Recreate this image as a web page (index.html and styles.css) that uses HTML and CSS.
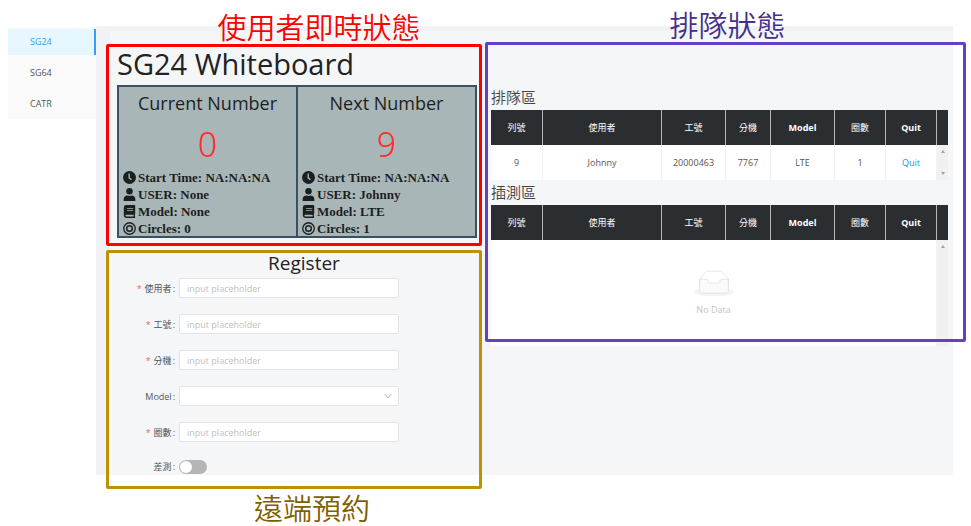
FILE: index.html
```html
<!DOCTYPE html>
<html lang="zh-Hant">
<head>
<meta charset="utf-8">
<title>SG24 Whiteboard</title>
<link rel="stylesheet" href="styles.css">
</head>
<body>
<svg class="sprite" aria-hidden="true">
  <symbol id="clock" viewBox="0 0 16 16"><circle cx="8" cy="8" r="8"/><path d="M7.600 3v5.500l2.800 2.200" fill="none" stroke="#a9b6b8" stroke-width="1.700"/></symbol>
  <symbol id="user" viewBox="0 0 16 16"><circle cx="8" cy="4" r="4"/><path d="M.8 16v-2.200c0-2.800 2-4.600 4.600-4.600 1.600.8 3.600.8 5.200 0 2.600 0 4.600 1.800 4.600 4.600V16z"/></symbol>
  <symbol id="book" viewBox="0 0 16 16"><path fill-rule="evenodd" d="M4 0h10.200c.5 0 .8.300.8.800v10.400c0 .3-.1.500-.3.600-.2.700-.2 1.500 0 2.200.2.100.3.300.3.600v.600c0 .5-.3.800-.8.800H4a3 3 0 0 1-3-3V3a3 3 0 0 1 3-3zm1 4v1h7.500V4zm0 2.200v1h7.500v-1zM4 12a1 1 0 0 0 0 2h9v-2z"/></symbol>
  <symbol id="rings" viewBox="0 0 16 16"><g fill="none" stroke="currentColor"><circle cx="8" cy="8" r="7.100" stroke-width="1.600"/><circle cx="8" cy="8" r="3.500" stroke-width="1.800"/></g></symbol>
</svg>
<div class="app">
  <nav class="sidebar">
    <a class="nav-item active" href="#sg24">SG24</a>
    <a class="nav-item" href="#sg64">SG64</a>
    <a class="nav-item" href="#catr">CATR</a>
  </nav>
  <main class="main">
    <div class="content">
      <div class="column">
        <section class="status">
          <div class="frame frame-red"><span class="caption">使用者即時狀態</span></div>
          <h1>SG24 Whiteboard</h1>
          <div class="cards">
            <article class="card">
              <h2>Current Number</h2>
              <p class="number">0</p>
              <ul>
                <li><svg><use href="#clock"/></svg>Start Time: NA:NA:NA</li>
                <li><svg><use href="#user"/></svg>USER: None</li>
                <li><svg><use href="#book"/></svg>Model: None</li>
                <li><svg><use href="#rings"/></svg>Circles: 0</li>
              </ul>
            </article>
            <article class="card">
              <h2>Next Number</h2>
              <p class="number">9</p>
              <ul>
                <li><svg><use href="#clock"/></svg>Start Time: NA:NA:NA</li>
                <li><svg><use href="#user"/></svg>USER: Johnny</li>
                <li><svg><use href="#book"/></svg>Model: LTE</li>
                <li><svg><use href="#rings"/></svg>Circles: 1</li>
              </ul>
            </article>
          </div>
        </section>
        <section class="register">
          <div class="frame frame-gold"><span class="caption">遠端預約</span></div>
          <h2>Register</h2>
          <form>
            <div class="field"><label for="name"><i>*</i>使用者<b>:</b></label><input class="control" id="name" type="text" placeholder="input placeholder" required></div>
            <div class="field"><label for="staff"><i>*</i>工號<b>:</b></label><input class="control" id="staff" type="text" placeholder="input placeholder" required></div>
            <div class="field"><label for="ext"><i>*</i>分機<b>:</b></label><input class="control" id="ext" type="text" placeholder="input placeholder" required></div>
            <div class="field"><label for="model">Model<b>:</b></label>
              <span class="control-wrap"><select class="control" id="model"><option></option><option>LTE</option></select><svg class="chevron" viewBox="0 0 8 6"><path d="M.5.8 4 5 7.500.8" fill="none" stroke="#bfbfbf"/></svg></span></div>
            <div class="field"><label for="circles"><i>*</i>圈數<b>:</b></label><input class="control" id="circles" type="text" placeholder="input placeholder" required></div>
            <div class="field"><label for="insert">差測<b>:</b></label><input class="switch" id="insert" type="checkbox" role="switch"></div>
          </form>
        </section>
      </div>
      <section class="queues">
        <div class="frame frame-purple"><span class="caption">排隊狀態</span></div>
        <h2>排隊區</h2>
        <table>
          <colgroup><col class="c-first"><col><col class="c-wide"><col class="c-small"><col class="c-wide"><col class="c-mid"><col class="c-mid"><col class="c-bar"></colgroup>
          <thead><tr><th>列號</th><th>使用者</th><th>工號</th><th>分機</th><th class="latin">Model</th><th>圈數</th><th class="latin">Quit</th><th></th></tr></thead>
          <tbody><tr><td>9</td><td>Johnny</td><td>20000463</td><td>7767</td><td>LTE</td><td>1</td><td><a href="#quit">Quit</a></td>
            <td class="bar"><div class="arrows"><span class="up"></span><span class="down"></span></div></td></tr></tbody>
        </table>
        <h2>插測區</h2>
        <table>
          <colgroup><col class="c-first"><col><col class="c-wide"><col class="c-small"><col class="c-wide"><col class="c-mid"><col class="c-mid"><col class="c-bar"></colgroup>
          <thead><tr><th>列號</th><th>使用者</th><th>工號</th><th>分機</th><th class="latin">Model</th><th>圈數</th><th class="latin">Quit</th><th></th></tr></thead>
          <tbody><tr class="tall"><td class="empty" colspan="7">
            <svg viewBox="0 0 64 41"><ellipse cx="32" cy="33" rx="32" ry="7" fill="#f3f3f3"/><g stroke="#d9d9d9"><path fill="#fff" d="M55 12.800 44.900 1.300C44.400.6 43.600 0 42.800 0H21.200c-.8 0-1.600.5-2.100 1.300L9 12.800V22h46z"/><path fill="#fafafa" d="M41.600 15.900c0-1.600 1-2.900 2.200-2.900H55v18.100c0 2.100-1.300 3.900-3 3.900H12c-1.600 0-3-1.800-3-3.900V13h11.200c1.200 0 2.200 1.300 2.200 2.900 0 1.700 1 3 2.200 3h14.800c1.200 0 2.200-1.400 2.200-3z"/></g></svg>
            <p>No Data</p></td>
            <td class="bar"><div class="arrows"><span class="up"></span><span class="down"></span></div></td></tr></tbody>
        </table>
      </section>
    </div>
  </main>
</div>
</body>
</html>
```
FILE: styles.css
```css
* { box-sizing: border-box; }

body {
  margin: 0;
  background: #fff;
  color: #555;
  font: 9px/17px "Open Sans", "Noto Sans CJK TC", sans-serif;
}

h1, h2, p, ul { margin: 0; padding: 0; font-weight: 400; }
a { color: #1890ff; text-decoration: none; }
.sprite { position: absolute; width: 0; height: 0; }

.app { display: flex; align-items: flex-start; min-height: 100vh; padding: 26px 18px 0 8px; }

/* Sidebar */
.sidebar {
  display: flex;
  flex-direction: column;
  gap: 5px;
  width: 88px;
  margin-top: 1px;
  padding: 2px 0;
  background: #fafafa;
}
.nav-item { padding-left: 22px; line-height: 26px; color: #555; }
.nav-item.active { background: #e6f7ff; color: #3a9cf5; border-right: 2px solid #3a9cf5; }

/* Page body */
.main { flex: 1; padding: 5px 0 0 14px; background: #f0f2f5; }
.content {
  display: grid;
  grid-template-columns: 360fr 457fr;
  gap: 14px;
  padding: 13px 5px 0 7px;
  background: #f4f6f8;
}
.column { display: grid; gap: 12px; min-width: 0; }
.status, .register, .queues { position: relative; min-width: 0; }

/* Annotation frames drawn over the sections */
.frame { position: absolute; border: 3px solid; border-radius: 2px; pointer-events: none; z-index: 1; }
.caption {
  position: absolute;
  left: 0;
  right: 0;
  text-align: center;
  font: 350 29px/42px "Noto Sans CJK TC", sans-serif;
}
.frame-red { inset: 0 -5px -8px -11px; border-color: #f00; color: #f00; }
.frame-gold { inset: 0 -5px -14px -11px; border-color: #bf9000; color: #7f6000; }
.frame-purple { inset: -2px -18px 4px -6px; border-color: #6640c4; color: #44308c; }
.frame-red .caption { bottom: 100%; padding-left: 50px; }
.frame-gold .caption { top: 100%; padding-left: 36px; }
.frame-purple .caption { bottom: 100%; padding-left: 4px; }

/* Live status */
h1 { color: #222; font-size: 29px; line-height: 40px; padding-bottom: 1px; }
.cards { display: grid; grid-template-columns: 1fr 1fr; background: #a9b6b8; border: 1px solid #3c5064; }
.card { padding: 3px 4px 0; border: 1px solid #3c5064; color: #1c1f20; height: 151px; }
.card h2 { text-align: center; font-size: 18px; line-height: 26px; }
.number {
  padding: 7px 0 4px;
  color: #ff2d2d;
  text-align: center;
  font: 300 34px/42px "Noto Sans", sans-serif;
}
.card ul { list-style: none; font: 700 13px/17px "Liberation Serif", serif; }
.card li { display: flex; align-items: center; gap: 2px; }
.card li svg { width: 13px; height: 13px; fill: currentColor; }

/* Register form */
.register h2 { padding-left: 14px; color: #222; text-align: center; font-size: 19px; line-height: 26px; }
form { display: grid; gap: 16px; padding-top: 2px; }
.field { display: grid; grid-template-columns: 58px 61%; gap: 4px; align-items: center; }
.field label { text-align: right; }
.field i { margin-right: 3px; color: #ff5c5c; font-style: normal; }
.field b { margin-left: 1px; font-weight: 400; }
.control {
  display: block;
  width: 100%;
  height: 20px;
  padding: 0 7px;
  border: 1px solid #e3e4e6;
  border-radius: 2px;
  background: #fff;
  color: #555;
  font: inherit;
  appearance: none;
}
.control::placeholder { color: #bfbfbf; }
.control-wrap { position: relative; }
.chevron { position: absolute; right: 7px; top: 7px; width: 8px; height: 6px; }
.switch {
  display: flex;
  width: 28px;
  height: 14px;
  margin: 0;
  padding: 1px;
  border-radius: 7px;
  background: #b5b5b5;
  appearance: none;
}
.switch::before { content: ""; width: 12px; height: 12px; border-radius: 50%; background: #fff; }
.switch:checked { background: #1890ff; justify-content: flex-end; }

/* Queue tables */
.queues { align-self: start; padding-top: 41px; }
.queues h2 { padding-bottom: 2px; font: 350 15px/23px "Noto Sans CJK TC", sans-serif; color: #444; }
table { width: 100%; table-layout: fixed; border-collapse: separate; border-spacing: 0; background: #fff; text-align: center; }
.c-first { width: 52px; }
.c-mid { width: 51px; }
.c-wide { width: 64px; }
.c-small { width: 45px; }
.c-bar { width: 11px; }
th { height: 35px; padding: 0; background: #2b2e31; color: #fff; border-right: 1px solid #b5b6b8; font-weight: 400; }
th.latin { font-weight: 700; }
th:last-child { border-right: 0; }
td { height: 35px; padding: 0; border-right: 1px solid #f3f3f3; }
.tall td { height: 106px; }
.bar { background: #f1f1f1; border: 0; }
.arrows { display: flex; flex-direction: column; justify-content: space-between; align-items: center; height: 100%; min-height: 35px; padding: 5px 0; }
.tall .arrows { min-height: 106px; padding-bottom: 2px; }
.tall .down { visibility: hidden; }
.up, .down { border: 2px solid transparent; }
.up { border-top: 0; border-bottom: 3px solid #a3a3a3; }
.down { border-bottom: 0; border-top: 3px solid #a3a3a3; }
.empty { color: #c4c4c4; }
.empty svg { display: block; width: 40px; height: 26px; margin: 3px auto 4px; overflow: visible; }
```
